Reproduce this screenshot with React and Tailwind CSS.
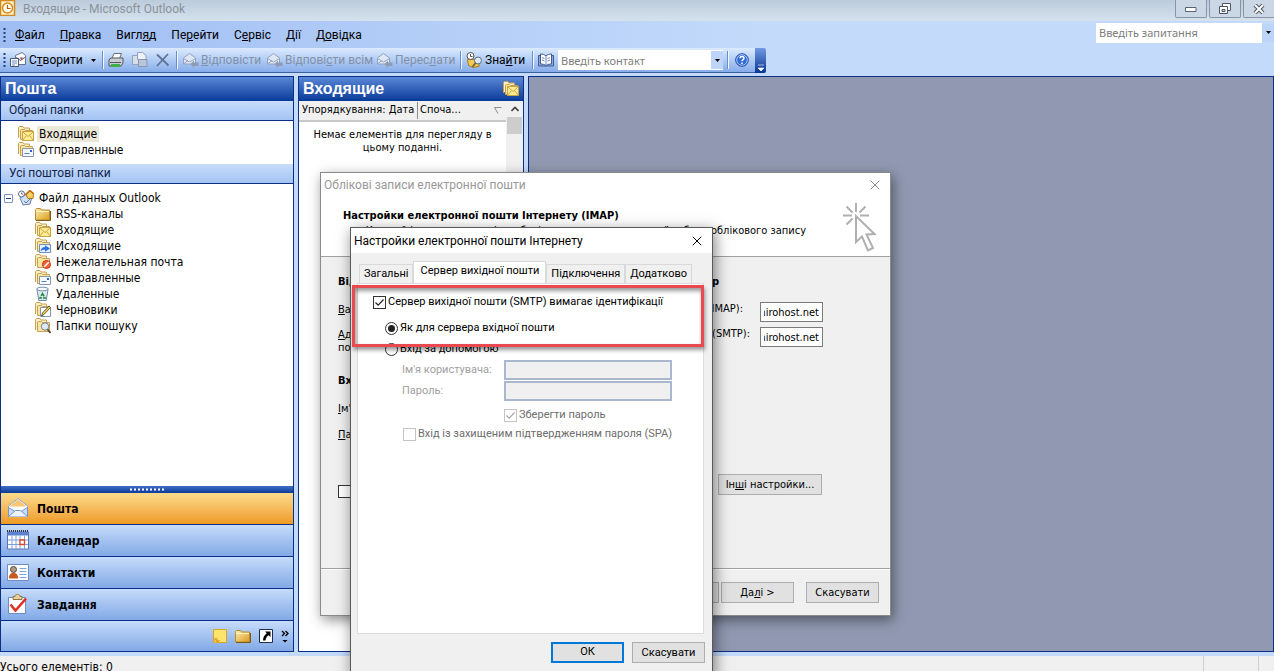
import React, { useState } from "react";
import { X } from "lucide-react";

const menuItems = [
  ["", "Ф", "айл"],
  ["", "П", "равка"],
  ["Вигл", "я", "д"],
  ["Пе", "р", "ейти"],
  ["С", "е", "рвіс"],
  ["", "Д", "ії"],
  ["Д", "о", "відка"],
];

const folders = [
  { name: "RSS-каналы", kind: "plain" },
  { name: "Входящие", kind: "inbox" },
  { name: "Исходящие", kind: "outbox" },
  { name: "Нежелательная почта", kind: "junk" },
  { name: "Отправленные", kind: "sent" },
  { name: "Удаленные", kind: "trash" },
  { name: "Черновики", kind: "drafts" },
  { name: "Папки пошуку", kind: "search" },
];

const navItems = [
  { name: "Пошта", kind: "mail" },
  { name: "Календар", kind: "calendar" },
  { name: "Контакти", kind: "contacts" },
  { name: "Завдання", kind: "tasks" },
];

const Mnemonic = ({ parts }) => (
  <span>
    {parts[0]}
    <u>{parts[1]}</u>
    {parts[2]}
  </span>
);

/* ---------- icons ---------- */

const FolderIcon = ({ kind }) => {
  if (kind === "trash") {
    return (
      <svg className="w-4 h-4 shrink-0" viewBox="0 0 16 16">
        <path d="M2 3.500l1.800 11h7.400l1.800-11z" fill="#dfe9f3" stroke="#6f8cae" />
        <ellipse cx="7.500" cy="3" rx="5.800" ry="1.800" fill="#f7fafc" stroke="#6f8cae" />
        <path d="M7.500 7.500l2.600 4.500H5z" fill="none" stroke="#1d8a3c" strokeWidth="1.500" strokeDasharray="3.200 1" />
      </svg>
    );
  }
  if (kind === "plain") {
    return (
      <svg className="w-4 h-4 shrink-0" viewBox="0 0 16 16">
        <defs>
          <linearGradient id="plainFolder" x1="0" y1="0" x2="1" y2="1">
            <stop offset="0" stopColor="#fdeeb0" />
            <stop offset="1" stopColor="#dc9c1e" />
          </linearGradient>
        </defs>
        <path d="M.5 4.500v-1l1-1h4l1 1.500h8v10H.5z" fill="url(#plainFolder)" stroke="#b98a2c" />
        <path d="M1 5.500h13" stroke="#fff3c4" />
        <path d="M1 14.500h14.500V5" fill="none" stroke="#7d5a15" />
      </svg>
    );
  }
  return (
    <svg className="w-4 h-4 shrink-0" viewBox="0 0 16 16">
      <path d="M.5 12V1.500l1-1h3.500l1 1.500h5.500v2" fill="#fdf0c0" stroke="#c79e55" />
      <path d="M2.500 13.500V4l1-.5h3l1 1h7v9z" fill="#fbe6a0" stroke="#c79e55" />
      {kind === "inbox" && (
        <>
          <path d="M4.500 5.500h11v9h-11z" fill="#fdec9c" stroke="#c9a53a" />
          <path d="M4.500 5.500L10 10.500l5.500-5M4.500 14.500l4-5M15.500 14.500l-4-5" fill="none" stroke="#d2a637" />
        </>
      )}
      {kind === "sent" && (
        <>
          <path d="M4.500 6.500h11v8h-11z" fill="#f4f8ff" stroke="#8794ab" />
          <path d="M12 8h2v2h-2z" fill="#2f5fd0" />
          <path d="M6.500 11.500h5" stroke="#5f7fc4" />
        </>
      )}
      {kind === "outbox" && (
        <>
          <path d="M4.500 6.500h11v8h-11z" fill="#e8f1ff" stroke="#6f93c9" />
          <path d="M5.500 13.500c.3-3 2-4.500 4.500-4.500V7.200l5 3.300-5 3.300v-2c-2 0-3 .3-4.500 1.700z" fill="#2f73e0" />
        </>
      )}
      {kind === "junk" && (
        <>
          <circle cx="11.500" cy="10.500" r="4" fill="#f0633a" stroke="#c9320f" />
          <path d="M9 13L14 8" stroke="#fff" strokeWidth="1.500" />
        </>
      )}
      {kind === "drafts" && (
        <>
          <path d="M5.500 5.500h10v9h-10z" fill="#fff" stroke="#8794ab" />
          <path d="M6.500 14l1-3 6.500-7 1.500 1.500-6.500 7z" fill="#f4d04b" stroke="#3f3a2c" strokeWidth=".8" />
        </>
      )}
      {kind === "search" && (
        <>
          <circle cx="10" cy="8.500" r="3.700" fill="#dcebfb" stroke="#76808c" />
          <path d="M12.500 11.300l3 3.500" stroke="#5a4a2c" strokeWidth="1.800" />
        </>
      )}
    </svg>
  );
};

const NavIcon = ({ kind }) => {
  if (kind === "mail") {
    return (
      <svg className="w-[22px] h-[22px] shrink-0" viewBox="0 0 22 22">
        <path d="M1.500 8L11 .5 20.500 8v10.500h-19z" fill="#fff" stroke="#8fa9cf" />
        <path d="M3 8l8-6.500L19 8l-8 5z" fill="#f9c772" />
        <path d="M4 8.500h14l-3 5H7z" fill="#fff" />
        <path d="M1.500 18.500v-9l6.500 4h6l6.500-4v9z" fill="#c9defa" stroke="#7697cb" />
        <path d="M1.500 18.500l7-6h5l7 6" fill="#eaf3ff" stroke="#7697cb" />
      </svg>
    );
  }
  if (kind === "calendar") {
    return (
      <svg className="w-[22px] h-[22px] shrink-0" viewBox="0 0 22 22">
        <path d="M.5 2h21v17H.5z" fill="#fff" stroke="#5576b8" />
        <path d="M1 2h20v3.500H1z" fill="#5b83cf" />
        <path d="M0 1h22" stroke="#333" strokeWidth="2" strokeDasharray="1 1" />
        <path d="M5 5.500V19M9 5.500V19M13 5.500V19M17.500 5.500V19M1 10h20M1 14.500h20" stroke="#7d9fdc" />
        <path d="M13 10h4.500v4.500H13z" fill="#fff" stroke="#e0452b" strokeWidth="1.300" />
      </svg>
    );
  }
  if (kind === "contacts") {
    return (
      <svg className="w-[22px] h-[22px] shrink-0" viewBox="0 0 22 22">
        <path d="M.5 2.500h21v16H.5z" fill="#fff" stroke="#6d8cc4" />
        <path d="M2 16.500c0-4 1.500-5.500 4.500-5.500s4.500 1.500 4.500 5.500z" fill="#c75c1e" />
        <circle cx="6.500" cy="7.500" r="3" fill="#b09a82" stroke="#4c4c4c" />
        <path d="M12.500 6.500h7M12.500 9.500h7M12.500 12.500h7M12.500 15.500h7" stroke="#7fa3df" />
      </svg>
    );
  }
  return (
    <svg className="w-[22px] h-[22px] shrink-0" viewBox="0 0 22 22">
      <path d="M1.500 3.500h17v16h-17z" fill="#fff" stroke="#6d8cc4" />
      <path d="M6 5.500v-3h2c0-3 5-3 5 0h2v3z" fill="#e8cf9c" stroke="#8f7641" />
      <path d="M3.500 10.500L8.500 16.500 19 4.500" fill="none" stroke="#e03028" strokeWidth="2.600" />
    </svg>
  );
};

const ReplyIcon = () => (
  <svg className="w-4 h-4 shrink-0" viewBox="0 0 16 16">
    <path d="M.5 6L6.500 1.500 12.500 6v6H.5z" fill="#dfe7f4" stroke="#94a3bd" />
    <path d="M.5 6.500l6 3.500 6-3.500M.5 12l4.500-3.500" fill="none" stroke="#94a3bd" />
    <path d="M7.500 12l3.500-3.500v2h4.500v3.500H11v2z" fill="#8e9bb3" />
  </svg>
);

const OutlookIcon = () => (
  <svg className="w-4 h-4 shrink-0" viewBox="0 0 16 16">
    <path d="M.5 .5h14v15H.5z" fill="#fdeec4" stroke="#d08a1e" strokeWidth="1.500" />
    <circle cx="7.500" cy="8" r="5" fill="#fffaf0" stroke="#d98c1a" strokeWidth="1.500" />
    <path d="M7.500 5v3.500h3" fill="none" stroke="#a8670f" strokeWidth="1.200" />
  </svg>
);

const DownArrow = () => (
  <svg className="w-[5px] h-[3px] shrink-0" viewBox="0 0 5 3">
    <path d="M0 0h5L2.500 3z" fill="#000" />
  </svg>
);

const Grip = () => (
  <svg className="w-[3px] h-4 shrink-0" viewBox="0 0 3 16">
    <path d="M1.500 1v15" stroke="#27417c" strokeWidth="2" strokeDasharray="2 2" />
  </svg>
);

const Separator = () => (
  <span className="w-px h-[18px] bg-[#6a8ccb] shrink-0 border-r border-[#f1f9ff] box-content"></span>
);

/* ---------- main window ---------- */

const TitleBar = () => (
  <header className="flex items-start h-[21px] shrink-0 bg-linear-to-b from-[#bccbdb] to-[#d5e2ee]">
    <OutlookIcon />
    <h1 className="ml-[7px] grow text-[12px] leading-[19px] text-[#8c939b] font-['Roboto',sans-serif]">
      Входящие - Microsoft Outlook
    </h1>
    <div className="flex gap-[2px] -mr-px">
      <button aria-label="Згорнути" className="grid place-items-center w-8 h-[18px] border border-t-0 border-[#8694a6] rounded-b-xs bg-[#cbd7e5]">
        <svg className="w-3 h-[6px]" viewBox="0 0 12 6">
          <path d="M.5 1.500h10.500v4H.5z" fill="#fff" stroke="#5a6472" />
        </svg>
      </button>
      <button aria-label="Відновити" className="grid place-items-center w-8 h-[18px] border border-t-0 border-[#8694a6] rounded-b-xs bg-[#cbd7e5]">
        <svg className="w-3 h-3" viewBox="0 0 12 12">
          <path d="M3.500 .5h8v7h-8z" fill="#fff" stroke="#4d5664" />
          <path d="M.5 3.500h8v7h-8z" fill="#fff" stroke="#4d5664" />
          <path d="M3 6.500h3v2H3z" fill="#cbd7e5" stroke="#4d5664" />
        </svg>
      </button>
      <button aria-label="Закрити" className="grid place-items-center w-8 h-[18px] border border-t-0 border-[#8694a6] rounded-b-xs bg-[#cbd7e5]">
        <svg className="w-3 h-[10px]" viewBox="0 0 12 10">
          <path d="M2 1l8 8M10 1L2 9" stroke="#4d5664" strokeWidth="4" />
          <path d="M2 1l8 8M10 1L2 9" stroke="#fff" strokeWidth="2" />
        </svg>
      </button>
    </div>
  </header>
);

const MenuBar = () => (
  <nav className="flex items-center h-[27px] shrink-0 pl-[3px] bg-linear-to-r from-[#9fbdf3] to-[#c3dafa] to-60% text-[12px] font-['Roboto',sans-serif]">
    <Grip />
    <div className="flex gap-[15px] pl-[9px] grow">
      {menuItems.map((parts) => (
        <button key={parts.join("")}>
          <Mnemonic parts={parts} />
        </button>
      ))}
    </div>
    <div className="flex h-5 mb-1">
      <input
        aria-label="Введіть запитання"
        placeholder="Введіть запитання"
        className="w-[166px] h-5 px-[3px] bg-white text-[11px] placeholder:text-[#7d7d7d] outline-none font-['Noto_Sans',sans-serif]"
      />
      <button aria-label="Список запитань" className="grid place-items-center w-3 h-[18px] mt-px bg-[#bdd5f9]">
        <DownArrow />
      </button>
    </div>
  </nav>
);

const Toolbar = () => (
  <div className="flex h-[25px] shrink-0 bg-[#c3dafa] text-[12px] leading-4 font-['Roboto',sans-serif]">
    <div className="flex items-center pl-[3px] bg-linear-to-b from-[#dcebfe] to-[#86acea] border-b border-[#3b619c]">
      <Grip />
      <button className="flex items-center gap-[3px] ml-1 w-[86px]">
        <svg className="w-4 h-4 shrink-0" viewBox="0 0 16 16">
          <path d="M5.500 3.500L12 .5l3.500 3v9h-10z" fill="#fff" stroke="#66718a" />
          <path d="M5.500 5l5 3.500 5-3.500" fill="#dbe7f8" stroke="#66718a" />
          <path d="M.5 6.500h8v8h-8z" fill="#fff" stroke="#4a5a7a" />
          <path d="M2 9h5M2 11h5M2 13h3" stroke="#6b8bc7" />
          <path d="M10.500 5.500h2v2h-2z" fill="#cf3a2a" />
        </svg>
        <span className="grow text-left">С<u>т</u>ворити</span>
        <DownArrow />
      </button>
      <span className="w-[6px]"></span>
      <Separator />
      <div className="flex gap-2 mx-1">
        <button aria-label="Друк">
          <svg className="w-4 h-4" viewBox="0 0 16 16">
            <path d="M4 6.500L6 1.500h7.500l-2 5z" fill="#fff" stroke="#6b6f77" />
            <path d="M1 7.500l2-1.500h12v5l-2 3H1z" fill="#c9ccd1" stroke="#52575f" />
            <path d="M2 10.500h11" stroke="#52575f" />
            <path d="M3 12h9v3H3z" fill="#3fae49" />
          </svg>
        </button>
        <button aria-label="Перемістити">
          <svg className="w-4 h-4" viewBox="0 0 16 16">
            <path d="M.5 3.500h6v9h-6z" fill="#d7deea" stroke="#94a3bd" />
            <path d="M5.500 .5h5l3.500 3v4H5.500z" fill="#eef2f8" stroke="#94a3bd" />
            <path d="M6.500 7.500h8.500v7H6.500z" fill="#b9c5d8" stroke="#8797b3" />
          </svg>
        </button>
        <button aria-label="Видалити">
          <svg className="w-4 h-4" viewBox="0 0 16 16">
            <path d="M1 2.500l11.500 11M12 2L1 14" stroke="#5f7394" strokeWidth="1.800" />
          </svg>
        </button>
      </div>
      <Separator />
      <div className="flex text-[#8390a6] ml-[5px]">
        <button disabled className="flex gap-[2px] w-[84px]">
          <ReplyIcon />
          <Mnemonic parts={["", "В", "ідповісти"]} />
        </button>
        <button disabled className="flex gap-[2px] w-[110px] whitespace-nowrap">
          <ReplyIcon />
          <Mnemonic parts={["Відпові", "с", "ти всім"]} />
        </button>
        <button disabled className="flex gap-[2px] w-[83px]">
          <ReplyIcon />
          <Mnemonic parts={["Перес", "л", "ати"]} />
        </button>
      </div>
      <Separator />
      <button className="flex gap-[3px] ml-1 w-[66px]">
        <svg className="w-4 h-4 shrink-0" viewBox="0 0 16 16">
          <path d="M1.500 7.500h9l3 6.500-6 1.500-5-2z" fill="#f2cb55" stroke="#a67c1e" />
          <circle cx="4.500" cy="4" r="3.500" fill="#fff" stroke="#555" />
          <path d="M4.500 2v2.500h2" fill="none" stroke="#555" />
          <circle cx="12" cy="8.500" r="3.500" fill="#dbe9fb" stroke="#5e6b80" />
          <path d="M9.500 11l-3 4" stroke="#6a5a30" strokeWidth="1.600" />
        </svg>
        <Mnemonic parts={["Зна", "й", "ти"]} />
      </button>
      <Separator />
      <button aria-label="Адресна книга" className="ml-1">
        <svg className="w-4 h-4" viewBox="0 0 16 16">
          <path d="M.5 3.500h15v10.500H.5z" fill="#8ea9d8" stroke="#3f5c96" />
          <path d="M2.500 2c2 0 4 .5 5.500 2 1.500-1.500 3.500-2 5.500-2v10c-2 0-4 .3-5.500 1.500C6.500 12.300 4.500 12 2.500 12z" fill="#fff" stroke="#3f5c96" />
          <path d="M8 4v9M4 5.500l2.500 1M4 8l2.500 1M12 5.500l-2.500 1M12 8l-2.500 1" stroke="#6f8cc2" />
        </svg>
      </button>
      <div className="flex items-center h-5 ml-1 bg-white">
        <input
          aria-label="Введіть контакт"
          placeholder="Введіть контакт"
          className="w-[153px] h-5 px-[3px] bg-white text-[11px] placeholder:text-[#7d7d7d] outline-none font-['Noto_Sans',sans-serif]"
        />
        <button aria-label="Список контактів" className="grid place-items-center w-3 h-[18px] bg-[#bdd5f9]">
          <DownArrow />
        </button>
      </div>
      <span className="w-1"></span>
      <Separator />
      <button aria-label="Довідка" className="mx-[6px]">
        <svg className="w-[14px] h-[14px]" viewBox="0 0 14 14">
          <circle cx="7" cy="7" r="6.300" fill="#2f6bd8" stroke="#24489c" />
          <circle cx="7" cy="7" r="5.300" fill="none" stroke="#cfe0fb" strokeWidth=".8" />
          <path d="M5 5.300C5 2.700 9 2.800 9 5.200 9 6.700 7 6.600 7 8.300M7 9.500v1.500" fill="none" stroke="#fff" strokeWidth="1.500" />
        </svg>
      </button>
    </div>
    <button aria-label="Параметри панелі" className="flex flex-col items-center justify-end w-[11px] pb-[2px] rounded-r-xs bg-linear-to-b from-[#7199e3] to-[#063590]">
      <svg className="w-[6px] h-[7px]" viewBox="0 0 6 7">
        <path d="M0 1h6M0 4h6L3 7z" fill="#fff" stroke="#fff" strokeWidth=".6" />
      </svg>
    </button>
  </div>
);

const PaneHeader = ({ children }) => (
  <div className="flex items-center justify-between h-6 shrink-0 pl-1 pr-1 bg-linear-to-b from-[#5a87d7] to-[#063a99]">
    {children}
  </div>
);

const Sidebar = () => (
  <aside className="flex flex-col w-[294px] shrink-0 border border-[#0a2f84] bg-white">
    <PaneHeader>
      <h2 className="text-[16px] leading-6 font-bold text-white font-['Liberation_Sans',Arial,sans-serif]">Пошта</h2>
    </PaneHeader>
    <h3 className="h-5 shrink-0 pl-2 text-[12px] leading-[19px] border-b border-[#0a2f84] bg-linear-to-b from-[#c8ddfb] to-[#a4c3f3] text-[#12254d] font-['Roboto',sans-serif]">
      Обрані папки
    </h3>
    <ul className="py-[5px] pl-[17px] text-[12px] leading-4 shrink-0">
      <li className="flex items-center gap-[3px]">
        <FolderIcon kind="inbox" />
        <span className="px-[2px] bg-[#ebe8d8]">Входящие</span>
      </li>
      <li className="flex items-center gap-[3px]">
        <FolderIcon kind="sent" />
        <span className="px-[2px]">Отправленные</span>
      </li>
    </ul>
    <h3 className="h-5 shrink-0 pl-2 mt-px text-[12px] leading-[19px] border-b border-[#0a2f84] bg-linear-to-b from-[#c8ddfb] to-[#a4c3f3] text-[#12254d] font-['Roboto',sans-serif]">
      Усі поштові папки
    </h3>
    <div className="grow min-h-0 overflow-hidden pt-[6px] pl-[3px] text-[12px] leading-4">
      <div className="flex items-center gap-[5px]">
        <button aria-label="Згорнути гілку" className="grid place-items-center w-[9px] h-[9px] border border-[#7b96c0] rounded-[1px] bg-white">
          <span className="w-[5px] h-px bg-[#24407c]"></span>
        </button>
        <svg className="w-4 h-4 shrink-0" viewBox="0 0 16 16">
          <path d="M2 8l6-4 6 3-2 7-7 1z" fill="#cfe0f6" stroke="#6b80a8" />
          <path d="M8 5l4-4 3.500 3.500-.5 4h-5z" fill="#f9cf62" stroke="#a9781d" />
          <path d="M7 5l5-4.500L16 4" fill="none" stroke="#c46f1a" strokeWidth="1.500" />
          <circle cx="3.500" cy="4" r="3" fill="#fff" stroke="#5d6b85" />
          <path d="M3.500 2.500V4H5" fill="none" stroke="#5d6b85" />
          <path d="M6 11l2 2 4-4" fill="none" stroke="#6b80a8" />
        </svg>
        <span>Файл данных Outlook</span>
      </div>
      <ul className="pl-[31px]">
        {folders.map((folder) => (
          <li key={folder.name} className="flex items-center gap-[5px]">
            <FolderIcon kind={folder.kind} />
            {folder.name}
          </li>
        ))}
      </ul>
    </div>
    <div className="grid place-items-center h-[7px] shrink-0 bg-linear-to-b from-[#3f6fc6] to-[#0a3a97]">
      <svg className="w-9 h-[3px]" viewBox="0 0 36 3">
        <path d="M1 1.500h35" stroke="#fff" strokeWidth="2" strokeDasharray="2 2" />
      </svg>
    </div>
    {navItems.map((item, index) => (
      <button
        key={item.name}
        className={
          "flex items-center gap-2 h-8 shrink-0 pl-[6px] border-b border-[#0a2f84] bg-linear-to-b text-[12px] font-bold " +
          (index === 0 ? "from-[#fbdb8b] to-[#ee9a1c]" : "from-[#c6dcfa] to-[#82a8e6]")
        }
      >
        <NavIcon kind={item.kind} />
        {item.name}
      </button>
    ))}
    <div className="flex items-center justify-end gap-[7px] h-[30px] shrink-0 pr-1 bg-linear-to-b from-[#c6dcfa] to-[#82a8e6]">
      <button aria-label="Нотатки">
        <svg className="w-4 h-4" viewBox="0 0 16 16">
          <path d="M1.500 1.500h13v13h-13z" fill="#fde46c" stroke="#d4a72a" />
          <path d="M2 9l5.500 5.500H2z" fill="#f4bf3a" />
          <path d="M3 11.500c1-2 3-1 2 1s2 1.500 2.500-.5" fill="none" stroke="#c48a1c" />
        </svg>
      </button>
      <button aria-label="Список папок">
        <FolderIcon kind="plain" />
      </button>
      <button aria-label="Ярлики">
        <svg className="w-4 h-4" viewBox="0 0 16 16">
          <path d="M1.500 1.500h13v13h-13z" fill="#fff" stroke="#1c2c50" />
          <path d="M7 3.500h5.500V9L10.700 7.200C8.500 8.500 8 10 7.500 12.500H5C5 9.500 6.500 7 8.800 5.300z" fill="#000" />
        </svg>
      </button>
      <button aria-label="Настроїти кнопки">
        <svg className="w-2 h-[13px]" viewBox="0 0 8 13">
          <path d="M1 1l2.500 2.500L1 6M4.500 1L7 3.500 4.500 6" fill="none" stroke="#000" strokeWidth="1.300" />
          <path d="M1.500 10h5L4 12.500z" fill="#000" />
        </svg>
      </button>
    </div>
  </aside>
);

const MessageList = () => (
  <section className="flex flex-col w-[226px] shrink-0 border border-[#0a2f84] bg-white">
    <PaneHeader>
      <h2 className="text-[16px] leading-6 font-bold text-white font-['Liberation_Sans',Arial,sans-serif]">Входящие</h2>
      <FolderIcon kind="inbox" />
    </PaneHeader>
    <div className="flex grow min-h-0">
      <div className="grow min-w-0">
        <div className="flex items-center h-[21px] pl-[3px] border-b-2 border-[#c9c9c9] bg-[#f0f0f0] whitespace-nowrap">
          <span className="w-[115px] shrink-0">Упорядкування: Дата</span>
          <span className="grow pl-[2px] border-l border-[#8d8d8d]">Споча...</span>
          <svg className="w-2 h-[7px] mr-1" viewBox="0 0 8 7">
            <path d="M7.500 .5h-7L4 6.500" fill="none" stroke="#8d8d8d" />
          </svg>
        </div>
        <p className="px-3 pt-[6px] text-center leading-[13px]">Немає елементів для перегляду в цьому поданні.</p>
      </div>
      <div className="w-[17px] shrink-0 bg-[#f0f0f0]">
        <button aria-label="Вгору" className="grid place-items-center w-full h-4">
          <svg className="w-2 h-[6px]" viewBox="0 0 8 6">
            <path d="M.5 5L4 1.500 7.500 5" fill="none" stroke="#404040" strokeWidth="1.600" />
          </svg>
        </button>
        <div className="h-[17px] mx-px bg-[#cdcdcd]"></div>
      </div>
    </div>
  </section>
);

/* ---------- dialogs ---------- */

const Checkbox = ({ id, checked, onChange, disabled }) => (
  <span className="relative w-[13px] h-[13px] shrink-0">
    <input
      id={id}
      type="checkbox"
      checked={checked}
      onChange={onChange}
      disabled={disabled}
      className="block appearance-none w-[13px] h-[13px] border border-[#333] bg-white disabled:border-[#c4c4c4]"
    />
    {checked && (
      <svg className="absolute inset-0 w-[13px] h-[13px] pointer-events-none" viewBox="0 0 13 13">
        <path d="M2.500 6.500L5.200 9.200 10.500 3.500" fill="none" stroke={disabled ? "#a8a8a8" : "#222"} strokeWidth="1.200" />
      </svg>
    )}
  </span>
);

const Radio = ({ id, checked, onChange }) => (
  <span className="relative w-[13px] h-[13px] shrink-0">
    <input
      id={id}
      type="radio"
      name="smtp-login"
      checked={checked}
      onChange={onChange}
      className="block appearance-none w-[13px] h-[13px] border border-[#333] rounded-full bg-white"
    />
    {checked && <span className="absolute inset-[3px] rounded-full bg-[#222] pointer-events-none"></span>}
  </span>
);

const DialogButton = ({ children, primary }) => (
  <button
    className={
      "w-[73px] h-[21px] bg-[#e1e1e1] " +
      (primary ? "border-2 border-[#0078d7]" : "pt-[2px] border border-[#adadad]")
    }
  >
    {children}
  </button>
);

const AccountsDialog = () => (
  <div
    role="dialog"
    aria-label="Облікові записи електронної пошти"
    className="absolute left-[320px] top-[172px] flex flex-col w-[571px] h-[444px] border border-[#8a8a8a] bg-[#f0f0f0] shadow-[2px_4px_12px_rgba(0,0,0,0.45)] whitespace-nowrap"
  >
    <div className="flex flex-col h-[84px] shrink-0 border-b border-[#a0a0a0] bg-white">
      <div className="flex items-center justify-between h-6 pl-[3px] pr-[7px]">
        <h2 className="text-[12px] text-[#999] font-['Roboto',sans-serif]">Облікові записи електронної пошти</h2>
        <button aria-label="Закрити">
          <X className="w-4 h-4 text-[#8c8c8c]" strokeWidth={1.5} />
        </button>
      </div>
      <div className="flex justify-between pl-[22px] pr-[14px]">
        <div className="pt-3">
          <h3 className="font-bold leading-[13px]">Настройки електронної пошти Інтернету (IMAP)</h3>
          <p className="w-[463px] h-[15px] mt-[1px] leading-[15px] text-right">
            Кожний із цих параметрів є обов'язковим для правильної роботи облікового запису
          </p>
        </div>
        <svg className="w-[34px] h-[50px] mt-[5px]" viewBox="0 0 34 50">
          <path
            d="M14 1v9M1 13.500h9M18 13.500h9M4.500 4.500l6 6M23.500 4.500l-6 6M4.500 22.500l6-6"
            fill="none"
            stroke="#b0b0b0"
            strokeWidth="2"
          />
          <path d="M14 14v26l6-5.500 6 14 5-2.500-6.500-13.500 8-.5z" fill="#fff" stroke="#b0b0b0" strokeWidth="2" />
        </svg>
      </div>
    </div>

    <div className="flex justify-between grow pl-[17px] pr-[67px] pt-[18px]">
      <div>
        <h4 className="h-[28px] font-bold leading-[13px]">Відомості про користувача</h4>
        <p className="h-[25px] leading-[13px]"><u>В</u>аше ім'я:</p>
        <p className="h-[46px] leading-[13px]"><u>А</u>дреса електронної<br />пошти:</p>
        <h4 className="h-[28px] font-bold leading-[13px]">Вхід до системи</h4>
        <p className="h-[26px] leading-[13px]"><u>І</u>м'я користувача:</p>
        <p className="h-[55px] leading-[13px]"><u>П</u>ароль:</p>
        <label className="flex items-center gap-1">
          <Checkbox id="spa-main" checked={false} onChange={() => {}} />
          Вхід (SPA)
        </label>
      </div>
      <div className="flex flex-col w-[235px]">
        <h4 className="w-[131px] h-[27px] text-right font-bold leading-[13px]">Відомості про сервер</h4>
        <div className="flex items-start justify-between h-[25px]">
          <label htmlFor="imap" className="w-[155px] text-right leading-[13px]">Сервер вхідної пошти (IMAP):</label>
          <input id="imap" dir="rtl" defaultValue="mirohost.net" className="w-[63px] h-5 px-[3px] border border-[#7a7a7a] bg-white text-left outline-none" />
        </div>
        <div className="flex items-start justify-between h-[25px]">
          <label htmlFor="smtp" className="w-[162px] text-right leading-[13px]">Сервер вихідної пошти (SMTP):</label>
          <input id="smtp" dir="rtl" defaultValue="mirohost.net" className="w-[63px] h-5 px-[3px] border border-[#7a7a7a] bg-white text-left outline-none" />
        </div>
        <button className="self-end w-[104px] h-[21px] pt-[2px] mt-[122px] mr-px border border-[#adadad] bg-[#e1e1e1]">
          Ін<u>ш</u>і настройки...
        </button>
      </div>
    </div>

    <div className="flex items-start justify-end h-[47px] shrink-0 pt-[13px] pr-[11px] border-t border-[#a0a0a0] shadow-[inset_0_1px_0_#fff]">
      <DialogButton>&lt; <u>Н</u>азад</DialogButton>
      <span className="w-[2px]"></span>
      <DialogButton>Да<u>л</u>і &gt;</DialogButton>
      <span className="w-3"></span>
      <DialogButton>Скасувати</DialogButton>
    </div>
  </div>
);

const tabs = ["Загальні", "Сервер вихідної пошти", "Підключення", "Додатково"];

const SettingsDialog = () => {
  const [tab, setTab] = useState(1);
  const [auth, setAuth] = useState(true);
  const [login, setLogin] = useState("same");

  return (
    <div
      role="dialog"
      aria-label="Настройки електронної пошти Інтернету"
      className="absolute left-[350px] top-[227px] flex flex-col w-[363px] h-[450px] border border-[#5a5a5a] bg-[#f0f0f0] shadow-[2px_4px_14px_rgba(0,0,0,0.5)] whitespace-nowrap font-['Roboto',sans-serif]"
    >
      <div className="flex items-center justify-between h-[25px] shrink-0 pl-[3px] pr-[7px] bg-white">
        <h2 className="text-[12px]">Настройки електронної пошти Інтернету</h2>
        <button aria-label="Закрити">
          <X className="w-4 h-4" strokeWidth={1.5} />
        </button>
      </div>

      <div role="tablist" className="flex items-end h-[30px] shrink-0 pl-2">
        {tabs.map((name, index) => (
          <button
            key={name}
            role="tab"
            aria-selected={tab === index}
            onClick={() => setTab(index)}
            className={
              "border border-b-0 border-[#d9d9d9] " +
              (tab === index ? "h-[22px] px-[6px] pb-[2px] bg-white" : "h-[19px] px-1 bg-[#f0f0f0]")
            }
          >
            {name}
          </button>
        ))}
      </div>

      <div role="tabpanel" className="h-[351px] shrink-0 ml-[6px] mr-2 pl-[15px] pt-[10px] border border-[#dcdcdc] bg-white">
        <div className="flex items-center gap-[2px] h-4">
          <Checkbox id="auth" checked={auth} onChange={() => setAuth(!auth)} />
          <label htmlFor="auth">Сервер вихідної пошти (SMTP) вимагає ідентифікації</label>
        </div>
        <div className="flex items-center gap-[2px] h-4 mt-[10px] pl-3">
          <Radio id="same" checked={login === "same"} onChange={() => setLogin("same")} />
          <label htmlFor="same">Як для сервера вхідної пошти</label>
        </div>
        <div className="flex items-center gap-[2px] h-4 mt-[5px] pl-3">
          <Radio id="other" checked={login === "other"} onChange={() => setLogin("other")} />
          <label htmlFor="other">Вхід за допомогою</label>
        </div>
        <div className="grid grid-cols-[102px_168px] items-center gap-y-px mt-[3px] pl-[29px] text-[#a0a0a0]">
          <label htmlFor="user">Ім'я користувача:</label>
          <input id="user" disabled className="h-5 border-2 border-[#a9b8cc] bg-[#f0f0f0] outline-none" />
          <label htmlFor="password">Пароль:</label>
          <input id="password" type="password" disabled className="h-5 border-2 border-[#a9b8cc] bg-[#f0f0f0] outline-none" />
        </div>
        <div className="flex items-center gap-[2px] h-4 mt-[6px] pl-[131px] text-[#6d6d6d]">
          <Checkbox id="save" checked disabled onChange={() => {}} />
          <label htmlFor="save">Зберегти пароль</label>
        </div>
        <div className="flex items-center gap-[2px] h-4 mt-[3px] pl-[30px] text-[#6d6d6d]">
          <Checkbox id="spa" checked={false} disabled onChange={() => {}} />
          <label htmlFor="spa">Вхід із захищеним підтвердженням пароля (SPA)</label>
        </div>
      </div>

      <div className="flex justify-end gap-2 pt-2 pr-[7px]">
        <DialogButton primary>ОК</DialogButton>
        <DialogButton>Скасувати</DialogButton>
      </div>
    </div>
  );
};

const App = () => {
  return (
    <div className="relative flex flex-col h-screen overflow-hidden bg-[#c3dafa] text-[11px] text-black font-['DejaVu_Sans_Condensed','DejaVu_Sans',sans-serif]">
      <TitleBar />
      <MenuBar />
      <Toolbar />
      <main className="flex gap-1 grow min-h-0 pt-[3px] pb-1">
        <Sidebar />
        <MessageList />
        <section className="grow border border-[#0a2f84] bg-[#9099b1]"></section>
      </main>
      <footer className="flex h-[15px] shrink-0 bg-[#f0f0f0] text-[12px] leading-[22px] overflow-hidden">
        <span className="grow">Усього елементів: 0</span>
        <span className="w-[55px] border-l border-[#cfcfcf]"></span>
        <span className="w-4 border-l border-[#cfcfcf]"></span>
      </footer>

      <AccountsDialog />
      <SettingsDialog />
      {/* highlight frame around the authentication options */}
      <div className="absolute left-[352px] top-[285px] w-[352px] h-[62px] border-3 border-[#ea4a4f] shadow-[1px_3px_4px_rgba(0,0,0,0.4),inset_1px_3px_4px_rgba(0,0,0,0.4)] pointer-events-none"></div>
    </div>
  );
};

export default App;
